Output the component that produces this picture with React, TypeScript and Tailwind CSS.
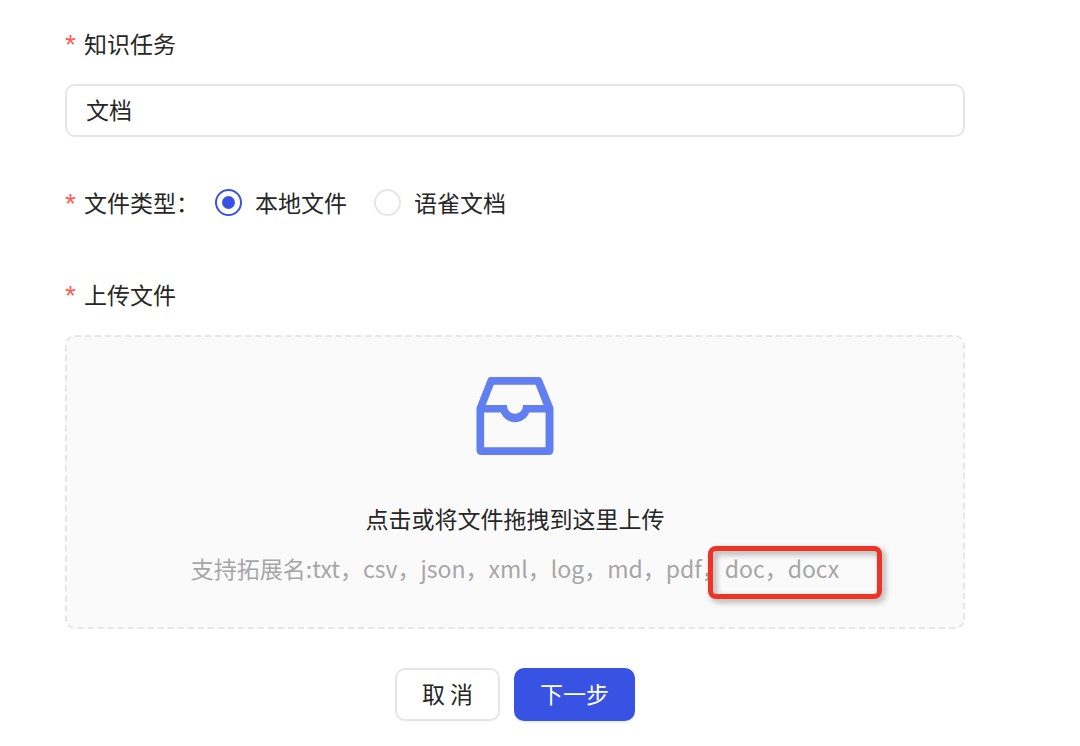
import React, { useState } from 'react';

interface FieldLabelProps {
    text: string;
    htmlFor?: string;
    id?: string;
}

const FieldLabel: React.FC<FieldLabelProps> = ({ text, htmlFor, id }) => {
    const content = (
        <>
            <span className="mr-[7px] w-3 pt-1 font-['Liberation_Sans',sans-serif] text-[28px] text-[#ff5a54]" aria-hidden="true">*</span>
            {text}
        </>
    );
    const className = 'flex h-8 w-fit items-center';

    if (htmlFor) {
        return <label htmlFor={htmlFor} id={id} className={className}>{content}</label>;
    }
    return <span id={id} className={className}>{content}</span>;
};

const InboxIcon: React.FC = () => (
    <svg className="h-[78px] w-[78px]" viewBox="50 50 232 235" fill="#617ff0" fillRule="evenodd" aria-hidden="true">
        <path d="M92 50H238Q244 50 247 56L282 143V270Q282 285 267 285H65Q50 285 50 270V143L84 56Q86 50 92 50ZM102 73L78 134H142V137A24 24 0 0 0 190 137V134H252L228 73ZM73 157V262H258V157H209C201 175 185 186 166 186S131 175 123 157Z" />
    </svg>
);

const fileTypes = [
    { value: 'local', label: '本地文件' },
    { value: 'yuque', label: '语雀文档' },
];

const App: React.FC = () => {
    const [task, setTask] = useState('文档');
    const [fileType, setFileType] = useState('local');

    return (
        <main className="min-h-screen bg-white font-['Noto_Sans_CJK_SC',sans-serif] text-[23px] leading-8 text-[#262626]">
            <form className="flex flex-col pt-[27px] pr-[115px] pb-6 pl-[65px]" onSubmit={(e) => e.preventDefault()}>
                {/* Task name */}
                <FieldLabel text="知识任务" htmlFor="task" />
                <input
                    id="task"
                    type="text"
                    value={task}
                    onChange={(e) => setTask(e.target.value)}
                    className="mt-[25px] h-[53px] w-full rounded-[10px] border-2 border-[#e6e6e6] bg-white px-[19px] pb-[3px] outline-none focus:border-[#3852e3]"
                />

                {/* File type */}
                <div className="mt-[49px] flex items-center" role="radiogroup" aria-labelledby="file-type">
                    <FieldLabel text="文件类型：" id="file-type" />
                    <div className="ml-4 flex gap-[27px]">
                        {fileTypes.map((type) => (
                            <label key={type.value} className="flex items-center gap-[13px]">
                                <input
                                    type="radio"
                                    name="fileType"
                                    value={type.value}
                                    checked={fileType === type.value}
                                    onChange={() => setFileType(type.value)}
                                    className="grid size-[27px] appearance-none place-items-center rounded-full border-2 border-[#e6e6e6] bg-white checked:border-[#3852e3] checked:before:size-[13px] checked:before:rounded-full checked:before:bg-[#3852e3] checked:before:content-['']"
                                />
                                {type.label}
                            </label>
                        ))}
                    </div>
                </div>

                {/* Upload */}
                <div className="mt-[60px]">
                    <FieldLabel text="上传文件" id="upload" />
                </div>
                <button
                    type="button"
                    aria-describedby="upload"
                    className="mt-[25px] flex w-full flex-col items-center rounded-[10px] border-2 border-dashed border-[#e6e6e6] bg-[#fafafa] pt-10 pb-[43px]"
                >
                    <InboxIcon />
                    <span className="mt-[47px]">点击或将文件拖拽到这里上传</span>
                    <span className="mt-[18px] text-[#a6a6a6]">
                        支持拓展名:txt，csv，json，xml，log，md，pdf，
                        <span className="relative">
                            doc，docx
                            <span className="absolute -top-[5px] -right-[43px] -bottom-[14px] -left-[17px] rounded-lg border-[5px] border-[#ed3323] drop-shadow-[3px_3px_3px_rgba(0,0,0,0.35)]" />
                        </span>
                    </span>
                </button>

                {/* Actions */}
                <div className="mt-[39px] flex justify-center gap-[14px]">
                    <button
                        type="button"
                        className="h-[53px] rounded-[10px] border-2 border-[#e6e6e6] bg-white px-[25px] pb-[3px] shadow-[0_2px_1px_rgba(0,0,0,0.02)]"
                    >
                        取 消
                    </button>
                    <button
                        type="submit"
                        className="h-[53px] rounded-[10px] bg-[#3852e3] px-[26px] pb-[3px] text-white shadow-[0_2px_1px_rgba(5,80,255,0.08)]"
                    >
                        下一步
                    </button>
                </div>
            </form>
        </main>
    );
};

export default App;
